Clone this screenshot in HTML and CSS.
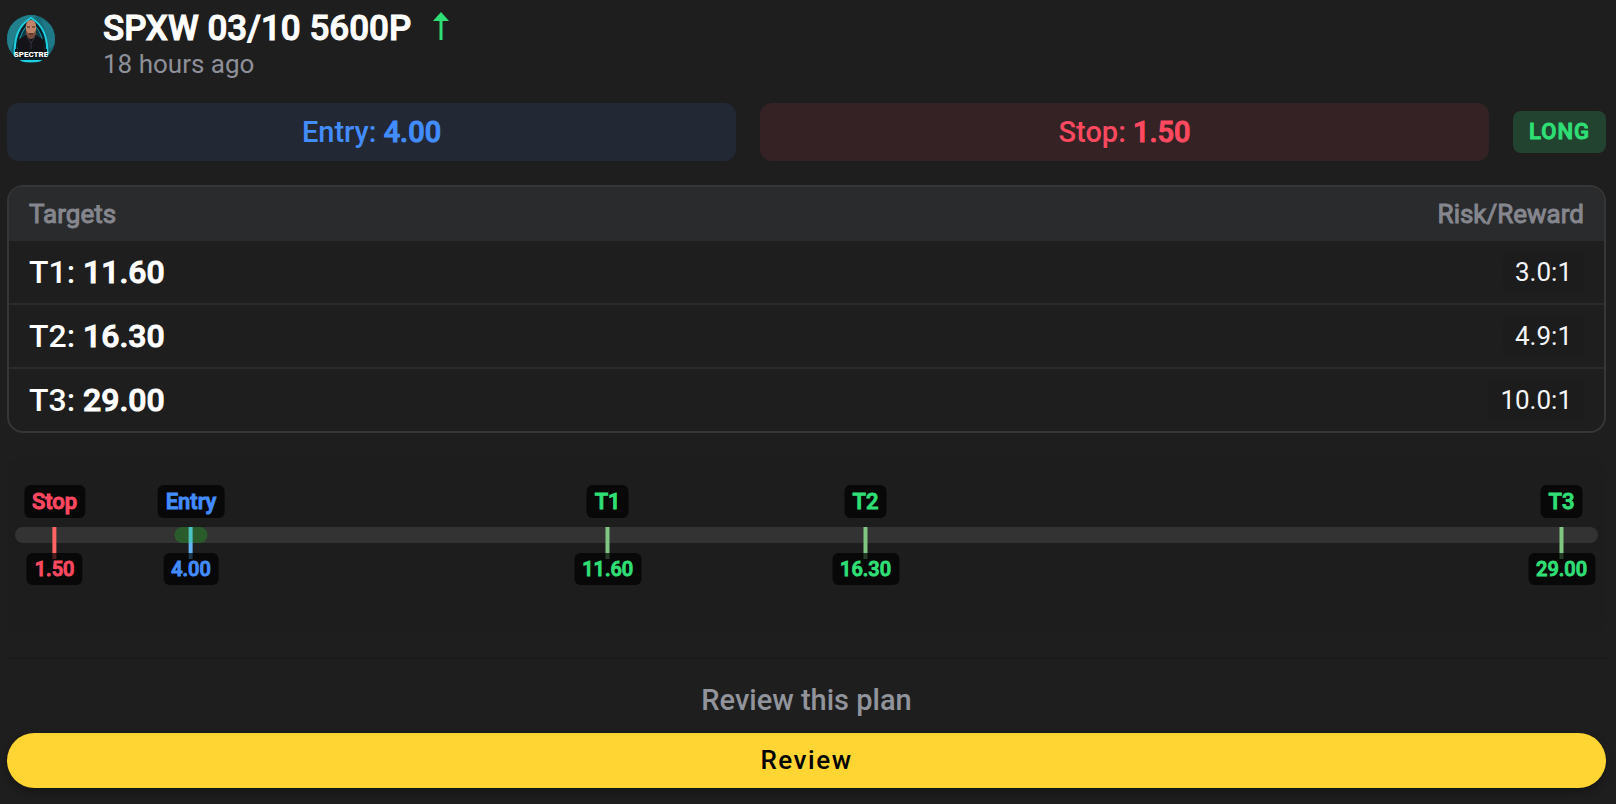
FILE: index.html
```html
<!DOCTYPE html>
<html lang="en">
<head>
    <meta charset="UTF-8">
    <meta name="viewport" content="width=device-width, initial-scale=1.0">
    <title>SPXW 03/10 5600P</title>
    <link rel="stylesheet" href="styles.css">
</head>
<body>
    <header class="plan-header">
        <svg class="avatar" viewBox="0 0 48 48" role="img" aria-label="Spectre">
            <defs>
                <clipPath id="round"><circle cx="24" cy="24" r="24"/></clipPath>
            </defs>
            <g clip-path="url(#round)">
                <rect width="48" height="48" fill="#176a77"/>
                <path d="M0 10L20 0H30L8 22 4 36 0 34z" fill="#22808d"/>
                <path d="M34 4L48 12V30L42 34 40 20z" fill="#1e7885"/>
                <path d="M24 3C12 10 6 22 8 46H40C42 22 36 10 24 3z" fill="#0b2028" stroke="#1fd0e0" stroke-width="2"/>
                <path d="M24 7C15 14 11 24 11 40H37C37 24 33 14 24 7z" fill="#0f3b46" stroke="#18a3b4"/>
                <path d="M11 40V26C13 22 18 22 20 19H28C30 22 35 22 37 26V40z" fill="#131318"/>
                <path d="M19 11C19 3 29 3 29 11V16C29 20 27 23 24 23 21 23 19 20 19 16z" fill="#c08468"/>
                <path d="M19 15L21 18H27L29 15V18C28 22 26 24 24 24 22 24 20 22 19 18z" fill="#7a4f40"/>
                <path d="M20 12H23M25 12H28M22 19H26" stroke="#40271f"/>
                <path d="M20 22L24 28 28 22M24 28V36" fill="none" stroke="#34353e"/>
                <path d="M8 34H40V43H8z" fill="#101419"/>
                <text class="avatar-name" x="24" y="42" text-anchor="middle">SPECTRE</text>
            </g>
        </svg>
        <div>
            <h1 class="plan-title">SPXW 03/10 5600P
                <svg class="arrow" viewBox="0 0 16 28" aria-hidden="true">
                    <path d="M8 0L16 9H9.500V28H6.500V9H0z" fill="#2fdf75"/>
                </svg>
            </h1>
            <p class="plan-time">18 hours ago</p>
        </div>
    </header>

    <section class="levels">
        <div class="level level-entry">Entry: <b>4.00</b></div>
        <div class="level level-stop">Stop: <b>1.50</b></div>
        <span class="side">LONG</span>
    </section>

    <div class="targets">
        <table class="targets-table">
            <thead>
                <tr><th>Targets</th><th>Risk/Reward</th></tr>
            </thead>
            <tbody>
                <tr><td>T1: <b>11.60</b></td><td><span class="ratio">3.0:1</span></td></tr>
                <tr><td>T2: <b>16.30</b></td><td><span class="ratio">4.9:1</span></td></tr>
                <tr><td>T3: <b>29.00</b></td><td><span class="ratio">10.0:1</span></td></tr>
            </tbody>
        </table>
    </div>

    <section class="chart">
        <div class="track">
            <div class="zone" style="left: 11.12%"></div>
            <div class="marker marker-stop" style="left: 2.5%">
                <span class="marker-name">Stop</span>
                <span class="marker-line"></span>
                <span class="marker-price">1.50</span>
            </div>
            <div class="marker marker-entry" style="left: 11.12%">
                <span class="marker-name">Entry</span>
                <span class="marker-line"></span>
                <span class="marker-price">4.00</span>
            </div>
            <div class="marker" style="left: 37.44%">
                <span class="marker-name">T1</span>
                <span class="marker-line"></span>
                <span class="marker-price">11.60</span>
            </div>
            <div class="marker" style="left: 53.73%">
                <span class="marker-name">T2</span>
                <span class="marker-line"></span>
                <span class="marker-price">16.30</span>
            </div>
            <div class="marker" style="left: 97.7%">
                <span class="marker-name">T3</span>
                <span class="marker-line"></span>
                <span class="marker-price">29.00</span>
            </div>
        </div>
    </section>

    <footer class="review">
        <p class="review-text">Review this plan</p>
        <button class="review-btn" type="button">Review</button>
    </footer>
</body>
</html>
```
FILE: styles.css
```css
* {
    box-sizing: border-box;
    margin: 0;
    padding: 0;
}
body {
    padding: 8px 10px 16px 7px;
    background: #1e1e1e;
    color: #fff;
    font-family: Roboto, sans-serif;
}
/* heavier look on the medium letter widths */
b,
.plan-title,
.side,
.targets-table th,
.marker {
    font-weight: 500;
    -webkit-text-stroke: 1px currentColor;
}
/* header */
.plan-header {
    display: flex;
    align-items: flex-start;
    gap: 48px;
    margin-bottom: 24px;
}
.avatar {
    width: 48px;
    height: 48px;
    margin-top: 7px;
}
.avatar-name {
    font-size: 8px;
    font-weight: 900;
    fill: #fff;
}
.plan-title {
    display: flex;
    align-items: flex-start;
    gap: 22px;
    font-size: 35px;
    line-height: 42px;
}
.arrow {
    width: 16px;
    height: 28px;
    margin-top: 4px;
}
.plan-time {
    color: #8e9099;
    font-size: 26px;
    line-height: 29px;
}
/* entry / stop / side */
.levels {
    display: flex;
    align-items: center;
    gap: 24px;
    margin-bottom: 24px;
}
.level {
    flex: 1;
    padding: 12px;
    border-radius: 12px;
    font-size: 29px;
    font-weight: 500;
    line-height: 34px;
    text-align: center;
}
.level-entry {
    background: #222834;
    color: #428cff;
}
.level-stop {
    background: #352224;
    color: #ff4961;
}
.side {
    padding: 6px 16px;
    border-radius: 8px;
    background: #21432f;
    color: #2fdf75;
    font-size: 22px;
    line-height: 30px;
    letter-spacing: 1px;
}
/* targets */
.targets {
    margin-bottom: 24px;
    overflow: hidden;
    border: 2px solid #363637;
    border-radius: 16px;
}
.targets-table {
    width: 100%;
    border-collapse: separate;
    border-spacing: 0;
}
.targets-table th,
.targets-table td {
    padding: 0 20px;
    text-align: left;
}
.targets-table th:last-child,
.targets-table td:last-child {
    text-align: right;
}
.targets-table th {
    height: 54px;
    background: #2a2b2d;
    color: #85868e;
    font-size: 26px;
    font-weight: 400;
}
.targets-table td {
    height: 64px;
    border-bottom: 2px solid #2b2b2c;
    font-size: 32px;
    font-weight: 500;
}
.targets-table tr:last-child td {
    height: 62px;
    border-bottom: 0;
}
.ratio {
    display: inline-block;
    padding: 4px 12px;
    border-radius: 8px;
    background: #1c1c1c;
    color: #f4f5f8;
    font-size: 26px;
    font-weight: 400;
    line-height: 30px;
    vertical-align: bottom;
}
/* price line */
.chart {
    margin-bottom: 24px;
    padding: 70px 8px 90px;
    border-radius: 16px;
    background: #1d1d1d;
}
.track {
    position: relative;
    height: 16px;
    border-radius: 8px;
    background: #333;
}
.zone {
    position: absolute;
    top: 0;
    width: 33px;
    height: 16px;
    border-radius: 8px;
    background: #295c2a;
    transform: translateX(-50%);
}
.marker {
    position: absolute;
    top: -42px;
    display: flex;
    flex-direction: column;
    align-items: center;
    color: #2fdf75;
    transform: translateX(-50%);
}
.marker-name,
.marker-price {
    padding: 2px 8px;
    border-radius: 6px;
    background: rgba(0, 0, 0, .7);
}
.marker-name {
    margin-bottom: 9px;
    font-size: 22px;
    line-height: 29px;
}
.marker-line {
    width: 4px;
    height: 32px;
    margin-bottom: -6px;
    background: #81c784;
}
.marker-price {
    z-index: 1;
    font-size: 20px;
    line-height: 28px;
}
.marker-stop {
    color: #ff4961;
}
.marker-stop .marker-line {
    background: #ff6464;
}
.marker-entry {
    color: #428cff;
}
.marker-entry .marker-line {
    background: linear-gradient(#4dc4c4 50%, #64b5f6 50%);
}
/* review */
.review {
    padding-top: 24px;
    border-top: 2px solid #1b1b1b;
    text-align: center;
}
.review-text {
    margin-bottom: 16px;
    color: #92949c;
    font-size: 29px;
    font-weight: 500;
    line-height: 34px;
}
.review-btn {
    width: 100%;
    height: 55px;
    padding-bottom: 2px;
    border: 0;
    border-radius: 28px;
    background: #ffd534;
    box-shadow: 0 4px 10px rgba(0, 0, 0, .3);
    color: #000;
    font-family: inherit;
    font-size: 26px;
    font-weight: 500;
    letter-spacing: .06em;
}
```
